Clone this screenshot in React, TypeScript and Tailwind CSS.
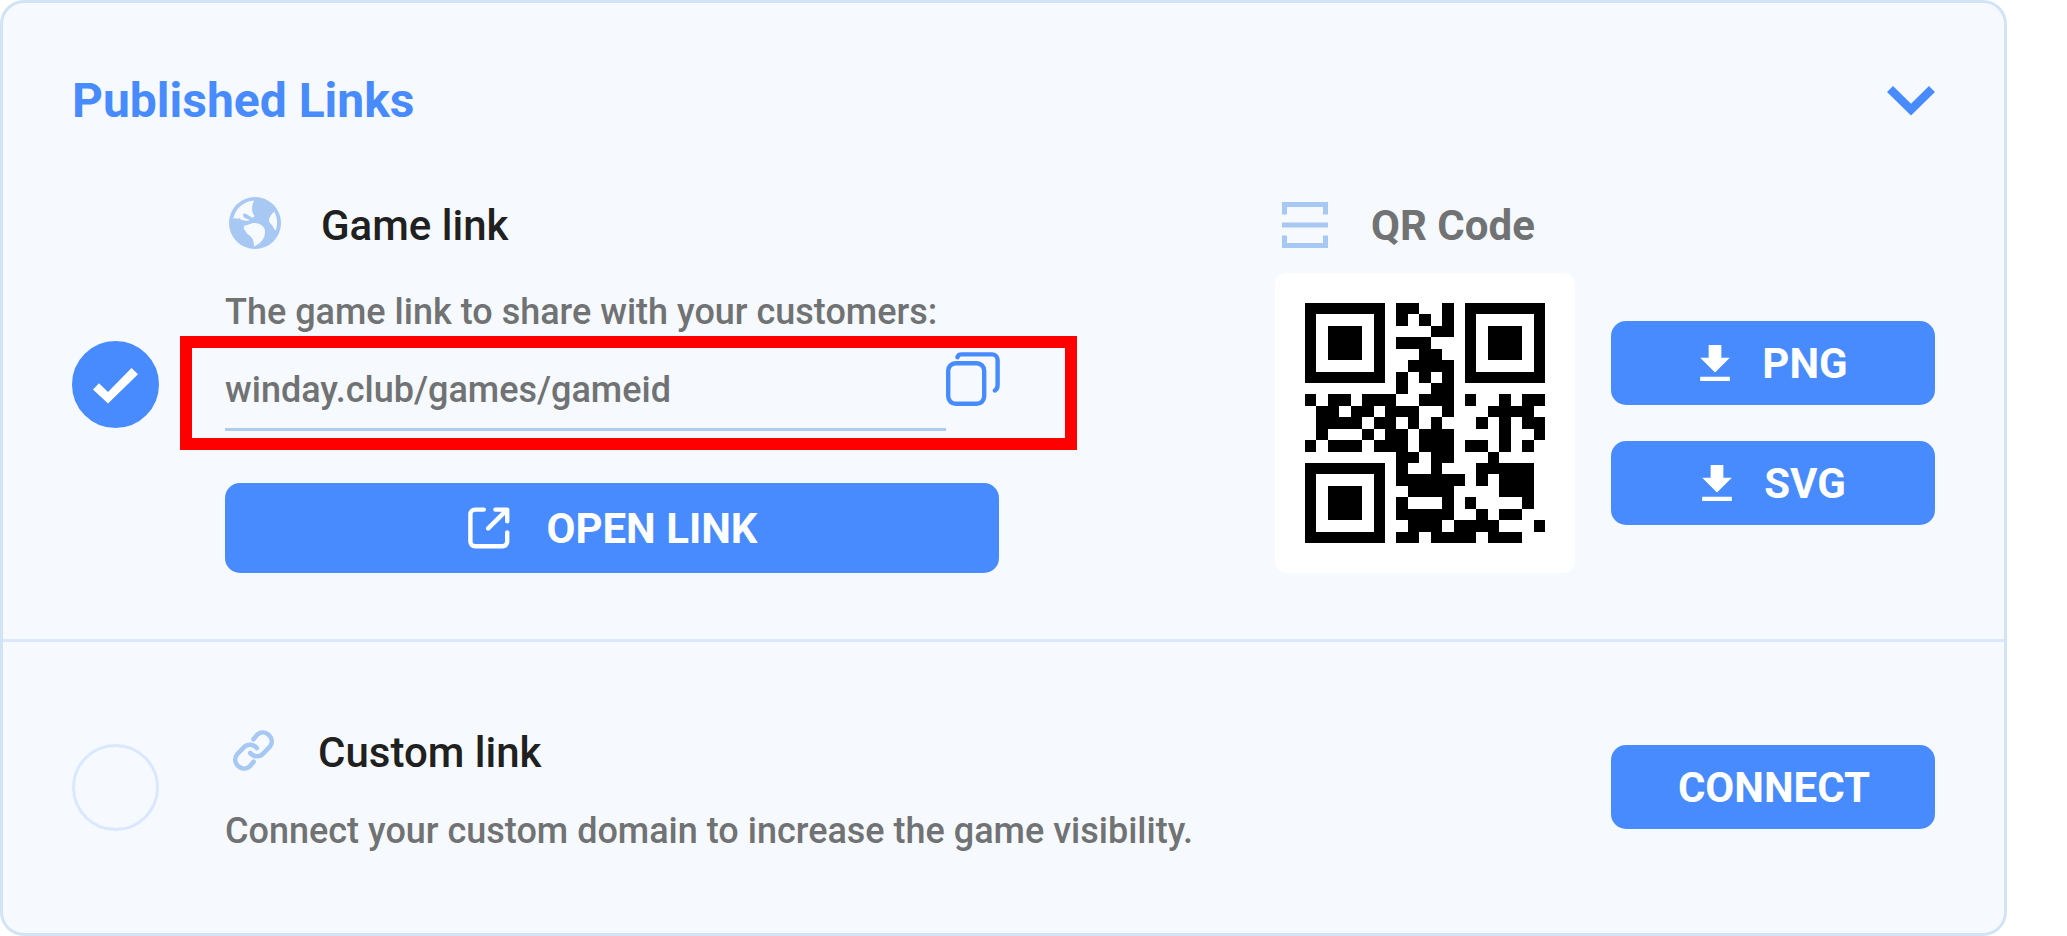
import React, { useState } from 'react';
import clsx from 'clsx';

const QR_ROWS = [
  '111111101100101111111',
  '100000101010101000001',
  '101110100001101011101',
  '101110101110001011101',
  '101110100011001011101',
  '100000100111101000001',
  '111111101010101111111',
  '000000001001100000000',
  '101101110011101001011',
  '011011011100100011110',
  '011110110101000101011',
  '010001011011100001001',
  '101110111011101101010',
  '000000001101100010000',
  '111111101001000111110',
  '100000101111110101110',
  '101110100111100001110',
  '101110101000101000010',
  '101110101111100101100',
  '100000100111011110001',
  '111111101101111011100',
];

const EarthIcon = () => (
  <svg className="mx-1 mb-1 size-[52px]" viewBox="0 0 52 52" aria-hidden="true">
    <circle cx="26" cy="26" r="26" fill="#a6c8f3" />
    <g fill="#f6faff">
      <path d="M25 3.6C23 8 22.600 12 23.600 15.500C25 18 26.500 20 24 20.400C21 20.600 18 16.500 15.600 16.600C13.200 17 13.600 19.600 16 21C18 22.200 20.500 22.200 20.500 23.400C17 24.400 13 23.600 10.500 21.600L8.800 20.400L9.600 22.800L6.600 21L4.200 22C6 12 14.500 4.200 25 3.600Z" />
      <path d="M15.200 29C17 27.500 20 27.600 22.500 26.400C28 25 35.400 27.600 36 34C36.200 42 31.500 46.800 24.800 49.500C25.200 44.500 24 41 20.500 38.500C17 36.500 17.500 34.500 15.500 33C14.600 31.500 14.400 30.200 15.200 29Z" />
      <path d="M45.300 14.500C48.500 21 49 27 46.600 33.600C44.500 31.500 44 28.500 41.500 26.500C39.400 24.500 39.500 22.500 41 20C42.200 18 43.600 16 45.300 14.500Z" />
    </g>
  </svg>
);

const ScanIcon = () => (
  <svg
    className="mx-[7px] size-[46px]"
    viewBox="0 0 46 46"
    fill="none"
    stroke="#a6c8f3"
    strokeWidth="5"
    aria-hidden="true"
  >
    <path d="M2.500 12.500V2.500H43.500V12.500M0 23H46M2.500 33.500V43.500H43.500V33.500" />
  </svg>
);

const ChainIcon = () => (
  <svg
    className="mx-[7px] mb-1 size-[43px]"
    viewBox="0 0 43 43"
    fill="none"
    stroke="#a6c8f3"
    strokeWidth="4.600"
    strokeLinecap="round"
    aria-hidden="true"
  >
    <path d="M21.400 10.200L25.600 5.300A8.800 8.800 0 0 1 38 17.500L31.200 24.700A8.800 8.800 0 0 1 18.200 24" />
    <path d="M21.600 32.800L17.400 37.700A8.800 8.800 0 0 1 5 25.500L11.800 18.300A8.800 8.800 0 0 1 24.800 19" />
  </svg>
);

const CopyIcon = () => (
  <svg
    className="size-[54px]"
    viewBox="0 0 54 54"
    fill="none"
    stroke="#488bff"
    strokeWidth="4.400"
    strokeLinecap="round"
    aria-hidden="true"
  >
    <rect x="2.200" y="11.200" width="36" height="40.600" rx="7.500" />
    <path d="M11.400 5.200C12 3.400 13.200 2.400 15.500 2.400H46A5.600 5.600 0 0 1 51.600 8V33C51.600 36 50.600 37.600 48.800 38.400" />
  </svg>
);

const OpenIcon = () => (
  <svg
    className="size-[42px]"
    viewBox="0 0 42 42"
    fill="none"
    stroke="currentColor"
    strokeWidth="4.400"
    strokeLinecap="round"
    strokeLinejoin="round"
    aria-hidden="true"
  >
    <path d="M15.800 2.600H7A4.600 4.600 0 0 0 2.400 7.200V34.600A4.600 4.600 0 0 0 7 39.200H34.600A4.600 4.600 0 0 0 39.200 34.600V25.400" />
    <path d="M27.400 2.600H39.200V14.200M20.200 21.400L38.400 3.400" />
  </svg>
);

const DownloadIcon = () => (
  <svg className="h-[36px] w-[30px]" viewBox="5 3 14 17" fill="currentColor" aria-hidden="true">
    <path d="M19 9h-4V3H9v6H5l7 7 7-7zM5 18v2h14v-2H5z" />
  </svg>
);

const QrCode = () => (
  <svg className="size-[240px]" viewBox="0 0 21 21" shapeRendering="crispEdges" role="img" aria-label="QR code">
    {QR_ROWS.flatMap((row, y) =>
      row.split('').map((cell, x) =>
        cell === '1' ? <rect key={`${x}-${y}`} x={x} y={y} width="1" height="1" /> : null
      )
    )}
  </svg>
);

interface HeadingProps {
  icon: React.ReactNode;
  className?: string;
  children: React.ReactNode;
}

const Heading: React.FC<HeadingProps> = ({ icon, className, children }) => (
  <h3 className={clsx('flex h-[60px] items-center gap-9 text-[42px]', className)}>
    {icon}
    {children}
  </h3>
);

interface OptionRadioProps {
  label: string;
  checked: boolean;
  onChange: () => void;
}

const OptionRadio: React.FC<OptionRadioProps> = ({ label, checked, onChange }) => (
  <span className="relative mr-[66px] size-[87px] shrink-0">
    <input
      type="radio"
      name="link-type"
      aria-label={label}
      checked={checked}
      onChange={onChange}
      className="block size-full appearance-none rounded-full border-[3px] border-[#dae8ff] checked:border-[#488bff] checked:bg-[#488bff]"
    />
    {checked && (
      <svg className="pointer-events-none absolute inset-0" viewBox="0 0 87 87" aria-hidden="true">
        <path d="M59.500 27L66 33.300L36 62.500L21 48.500L27 42.300L36 51Z" fill="#fff" />
      </svg>
    )}
  </span>
);

interface ButtonProps {
  className?: string;
  icon?: React.ReactNode;
  children: React.ReactNode;
}

const Button: React.FC<ButtonProps> = ({ className, icon, children }) => (
  <button
    type="button"
    className={clsx(
      'flex items-center justify-center rounded-[15px] bg-[#488bff] pl-0.5 text-[42px] font-bold text-white',
      className
    )}
  >
    {icon}
    {children}
  </button>
);

const App: React.FC = () => {
  const [selected, setSelected] = useState('game');

  return (
    <main className="bg-white pr-[60px] font-['Roboto',sans-serif] text-[#707273]">
      <div className="rounded-3xl border-[3px] border-[#d3e3f6] bg-[#f6faff]">
        <section className="px-[69px] pt-[70px] pb-[66px]">
          <header className="flex items-center justify-between text-[#488bff]">
            <h2 className="text-[48px] leading-[56px] font-bold">Published Links</h2>
            <button type="button" aria-label="Collapse">
              <svg className="h-[30px] w-[48px]" viewBox="0 0 48 30" fill="currentColor" aria-hidden="true">
                <path d="M0 6L6 0L24 17.700L42 0L48 6L24 29.600Z" />
              </svg>
            </button>
          </header>

          <div className="mt-[66px] flex items-center">
            <OptionRadio label="Game link" checked={selected === 'game'} onChange={() => setSelected('game')} />

            <div className="flex-1 pr-[276px]">
              <Heading icon={<EarthIcon />} className="font-medium text-[#1f2120]">
                Game link
              </Heading>
              <label htmlFor="game-link" className="mt-9 block text-[36px] leading-[42px] font-medium">
                The game link to share with your customers:
              </label>
              <div className="mt-[3px] -mr-[78px] -ml-[45px] flex h-[114px] items-start border-[12px] border-[#ff0000] pr-[65px] pl-[33px]">
                <input
                  id="game-link"
                  type="text"
                  readOnly
                  value="winday.club/games/gameid"
                  className="h-[83px] min-w-0 flex-1 border-b-[3px] border-[#afcbf0] bg-transparent pt-1 text-[36px] font-medium outline-none"
                />
                <button type="button" aria-label="Copy link" className="mt-1">
                  <CopyIcon />
                </button>
              </div>
              <Button className="mt-[33px] h-[90px] w-full gap-9" icon={<OpenIcon />}>
                OPEN LINK
              </Button>
            </div>

            <div>
              <Heading icon={<ScanIcon />} className="font-bold">
                QR Code
              </Heading>
              <div className="mt-[18px] flex items-center gap-9">
                <div className="rounded-xl bg-white p-[30px]">
                  <QrCode />
                </div>
                <div className="flex w-[324px] flex-col gap-9">
                  <Button className="h-[84px] gap-8" icon={<DownloadIcon />}>
                    PNG
                  </Button>
                  <Button className="h-[84px] gap-8" icon={<DownloadIcon />}>
                    SVG
                  </Button>
                </div>
              </div>
            </div>
          </div>
        </section>

        <section className="flex items-center border-t-[3px] border-[#d9e7ff] px-[69px] pt-20 pb-[81px]">
          <OptionRadio label="Custom link" checked={selected === 'custom'} onChange={() => setSelected('custom')} />
          <div className="flex-1">
            <Heading icon={<ChainIcon />} className="font-medium text-[#1f2120]">
              Custom link
            </Heading>
            <p className="mt-7 text-[36px] leading-[42px] font-medium">
              Connect your custom domain to increase the game visibility.
            </p>
          </div>
          <Button className="h-[84px] w-[324px]">CONNECT</Button>
        </section>
      </div>
    </main>
  );
};

export default App;
